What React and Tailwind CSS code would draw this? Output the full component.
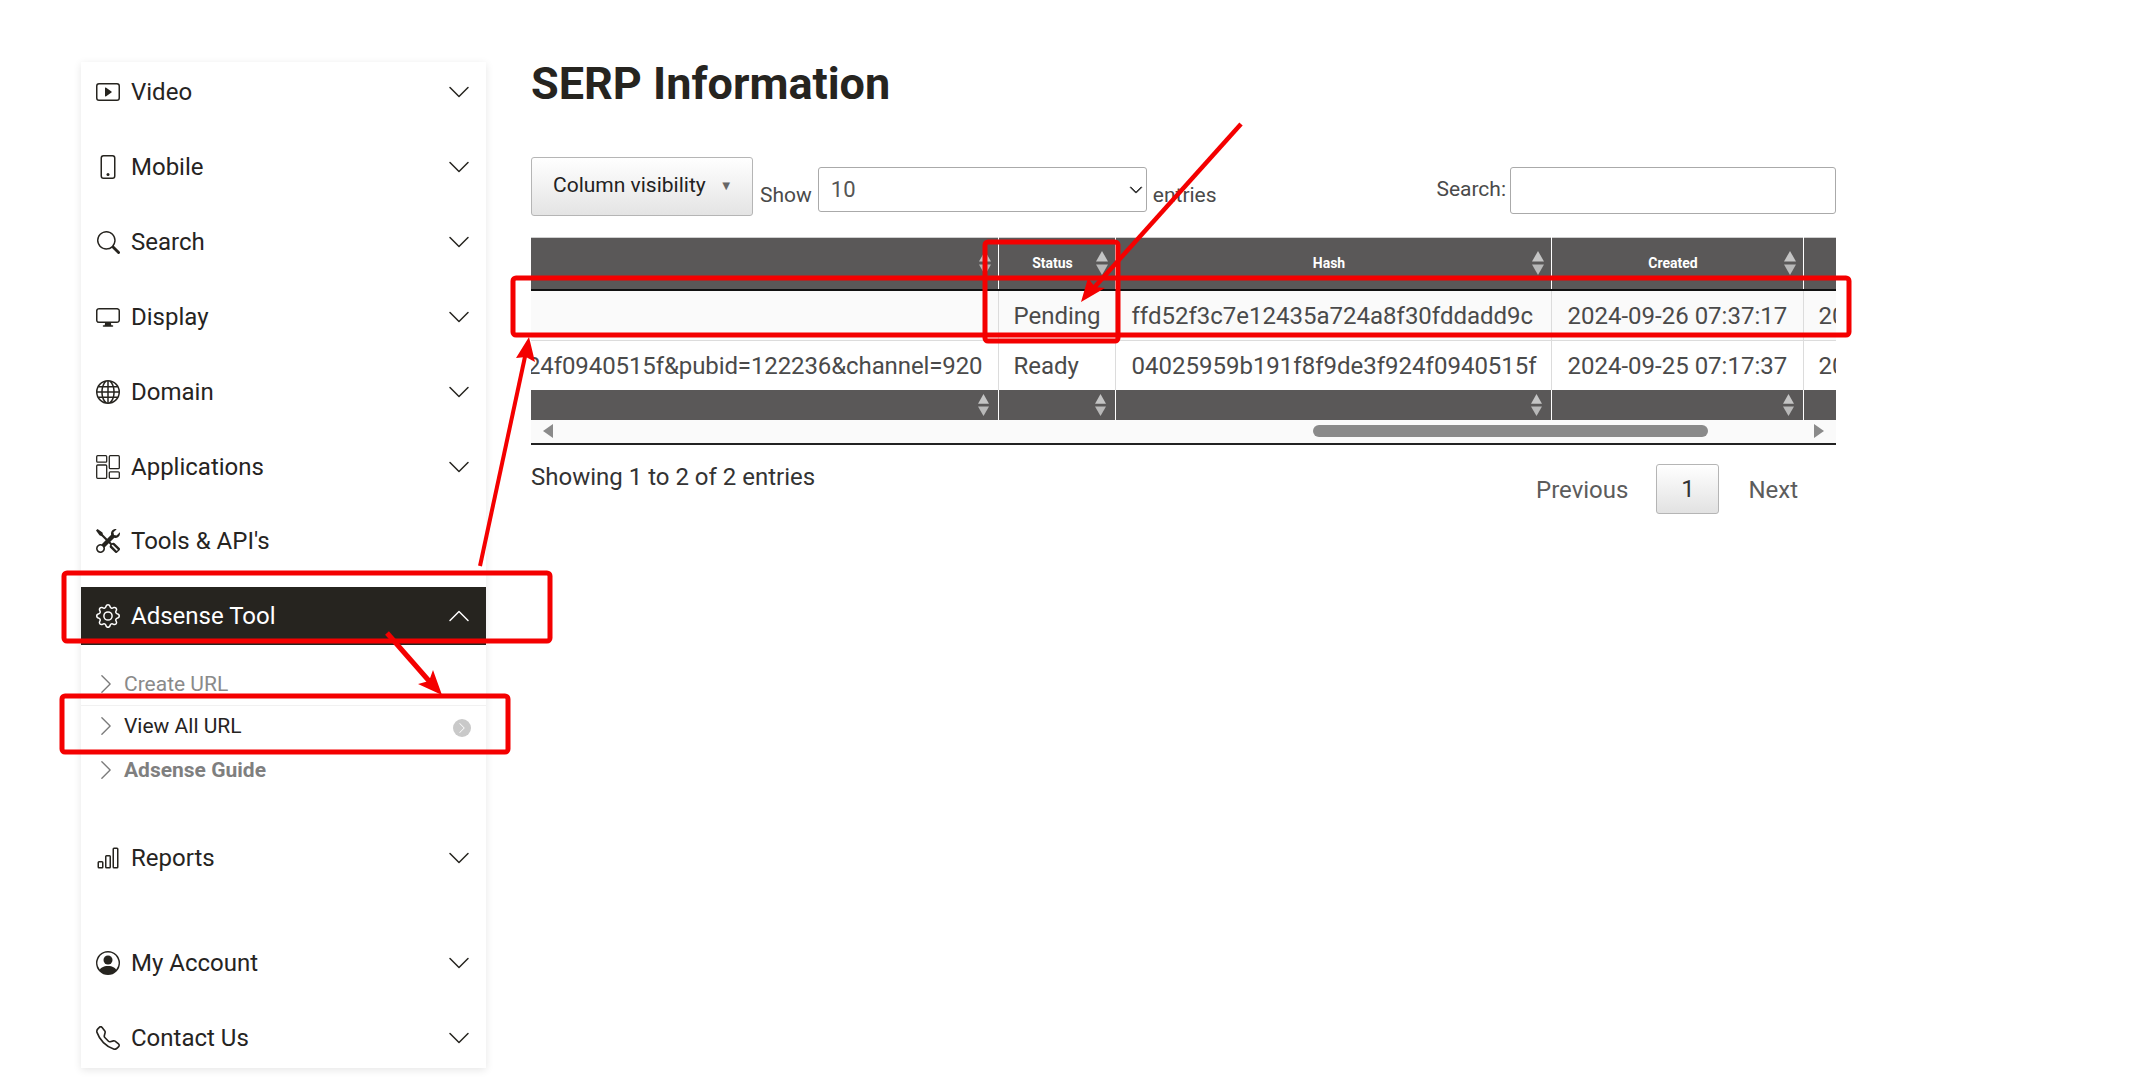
import React from "react";
import { BsPlayBtn, BsPhone, BsSearch, BsDisplay, BsGlobe, BsTools, BsGear, BsBarChart, BsPersonCircle, BsTelephone, BsChevronDown, BsChevronUp, BsChevronRight } from "react-icons/bs";

const Apps = () => (
  <svg width="24" height="24" viewBox="0 0 24 24" fill="none" stroke="currentColor" strokeWidth="1.3">
    <rect x="0.7" y="0.7" width="10" height="6.5" rx="1" />
    <rect x="13.3" y="0.7" width="10" height="13" rx="1" />
    <rect x="0.7" y="10" width="10" height="13.3" rx="1" />
    <rect x="13.3" y="16.8" width="10" height="6.5" rx="1" />
  </svg>
);

const Row = ({ icon, label, chevron = true, className = "" }) => (
  <div className={`h-[58px] flex items-center pl-[15px] pr-[15px] text-[#26241f] ${className}`}>
    <span className="w-[24px] h-[24px] flex items-center justify-center shrink-0 text-[24px]">{icon}</span>
    <span className="ml-[11px] text-[24px] leading-none">{label}</span>
    {chevron && <BsChevronDown className="ml-auto text-[24px] text-[#26241f]" />}
  </div>
);

const Sub = ({ label, className = "", labelClass = "", border = false, dot = false }) => (
  <div className={`h-[43px] flex items-center pl-[14px] pr-[15px] text-[21px] leading-none ${border ? "border-t border-[#f1f1f1] pb-[2px]" : ""} ${className}`}>
    <BsChevronRight className="text-[22px] text-[#7c7c7c] shrink-0" />
    <span className={`ml-[7px] ${labelClass}`}>{label}</span>
    {dot && (
      <span className="ml-auto mt-[3px] w-[18px] h-[18px] rounded-full bg-[#c9c9c9] flex items-center justify-center">
        <BsChevronRight className="text-[12px] text-white" />
      </span>
    )}
  </div>
);

const Sort = ({ big = false }) => (
  <svg width={big ? 14 : 13} height={big ? 24 : 22} viewBox="0 0 14 24" className="shrink-0">
    <path d="M7 0 L13 10.5 H1 Z" fill="#c4c4c4" />
    <path d="M7 24 L13 13.5 H1 Z" fill="#b8b8b8" />
  </svg>
);

const Th = ({ label }) => (
  <th className="relative h-[52px] p-0 font-bold text-[14px] text-white border-l border-white">
    <span className="block pr-[8px] text-center leading-none">{label}</span>
    <span className="absolute right-[6px] top-[13px]"><Sort big /></span>
  </th>
);

const Td = ({ children, first = false, pad = "pl-[15px]" }) => (
  <td className={`p-0 text-[24px] leading-[30px] text-[#4a4a4a] ${first ? "" : "border-l border-[#dcdcdc]"}`}>
    <div className={`flex pt-[2px] whitespace-nowrap overflow-hidden ${first ? "justify-end pr-[15px] tracking-[-0.1px]" : pad}`}>{children}</div>
  </td>
);

const FootTh = ({ first = false }) => (
  <th className={`h-[30px] p-0 ${first ? "" : "border-l border-white"}`}>
    <div className="flex justify-end pr-[8px]"><Sort /></div>
  </th>
);

export default function App() {
  return (
    <div className="relative w-[2143px] h-[1087px] overflow-hidden bg-white font-['Roboto',sans-serif] text-[#26241f]">
      <div className="flex">
        <aside className="ml-[81px] mt-[62px] w-[405px] h-[1006px] bg-white shadow-[0_2px_8px_rgba(0,0,0,0.1)] pt-[1px] flex flex-col gap-[17px]">
          <Row icon={<BsPlayBtn />} label="Video" />
          <Row icon={<BsPhone />} label="Mobile" />
          <Row icon={<BsSearch className="text-[23px]" />} label="Search" />
          <Row icon={<BsDisplay />} label="Display" />
          <Row icon={<BsGlobe />} label="Domain" />
          <Row icon={<Apps />} label="Applications" />
          <Row icon={<BsTools />} label="Tools & API's" chevron={false} className="-mt-px" />
          <div className="h-[58px] bg-[#26241f] flex items-center pl-[15px] pr-[15px] text-white">
            <BsGear className="text-[24px] shrink-0" />
            <span className="ml-[11px] text-[24px] leading-none">Adsense Tool</span>
            <BsChevronUp className="ml-auto text-[24px]" />
          </div>
          <div className="flex flex-col -mt-[17px] pt-[17px] pb-[21px]">
            <Sub label="Create URL" className="text-[#8a8a8a]" labelClass="mt-[2px]" />
            <Sub label="View All URL" className="text-[#26241f]" border dot />
            <Sub label="Adsense Guide" className="text-[#7f7f7f] font-bold" labelClass="mt-[2px]" />
          </div>
          <Row icon={<BsBarChart />} label="Reports" />
          <div className="mt-[30px]"><Row icon={<BsPersonCircle />} label="My Account" /></div>
          <Row icon={<BsTelephone />} label="Contact Us" />
        </aside>

        <main className="ml-[45px] w-[1305px]">
          <h1 className="mt-[57px] h-[54px] text-[45px] leading-[54px] font-bold text-[#26241f]">SERP Information</h1>

          <div className="mt-[46px] h-[59px] flex items-start">
            <button className="w-[222px] h-[59px] pb-[2px] border border-[#b5b5b5] rounded-[3px] bg-gradient-to-b from-white to-[#e4e4e4] flex items-center pl-[21px] text-[21px] text-[#222]">
              Column visibility
              <span className="ml-[14px] text-[13px] text-[#666]">▼</span>
            </button>
            <span className="ml-[7px] mt-[26px] text-[21px] leading-[24px] text-[#4a4a4a]">Show</span>
            <div className="ml-[6px] mt-[10px] w-[329px] h-[45px] border border-[#aaa] rounded-[3px] flex items-center pl-[12px] pr-[3px] text-[22px] text-[#555]">
              10
              <BsChevronDown className="ml-auto text-[14px] text-[#333] stroke-[1px]" />
            </div>
            <span className="ml-[6px] mt-[26px] text-[21px] leading-[24px] text-[#4a4a4a]">entries</span>
            <span className="ml-auto mt-[20px] text-[21px] leading-[24px] text-[#4a4a4a]">Search:</span>
            <div className="ml-[4px] mt-[10px] w-[326px] h-[47px] border border-[#aaa] rounded-[3px]" />
          </div>

          <div className="mt-[21px] w-[1305px] overflow-hidden">
            <table className="table-fixed w-[1305px] border-collapse">
              <colgroup>
                <col className="w-[467px]" />
                <col className="w-[117px]" />
                <col className="w-[436px]" />
                <col className="w-[252px]" />
                <col className="w-[33px]" />
              </colgroup>
              <thead>
                <tr className="bg-[#5a5858] border-t border-[#cfcfcf] border-b-2 border-b-[#111]">
                  <th className="relative h-[52px] p-0"><span className="absolute right-[6px] top-[13px]"><Sort big /></span></th>
                  <Th label="Status" />
                  <Th label="Hash" />
                  <Th label="Created" />
                  <th className="border-l border-white p-0" />
                </tr>
              </thead>
              <tbody>
                <tr className="h-[51px] bg-[#fafafa] border-b border-[#dcdcdc]">
                  <Td first>{""}</Td>
                  <Td>Pending</Td>
                  <Td pad="pl-[16px]">ffd52f3c7e12435a724a8f30fddadd9c</Td>
                  <Td pad="pl-[16px]">2024-09-26 07:37:17</Td>
                  <Td>2024-09-26 08:00:00</Td>
                </tr>
                <tr className="h-[49px] bg-white">
                  <Td first>hash=04025959b191f8f9de3f924f0940515f&amp;pubid=122236&amp;channel=920</Td>
                  <Td>Ready</Td>
                  <Td pad="pl-[16px]">04025959b191f8f9de3f924f0940515f</Td>
                  <Td pad="pl-[16px]">2024-09-25 07:17:37</Td>
                  <Td>2024-09-25 08:00:00</Td>
                </tr>
              </tbody>
              <tfoot>
                <tr className="bg-[#5a5858]">
                  <FootTh first />
                  <FootTh />
                  <FootTh />
                  <FootTh />
                  <th className="border-l border-white p-0" />
                </tr>
              </tfoot>
            </table>
            <div className="h-[25px] bg-[#fafafa] border-b-2 border-[#222] flex items-center pl-[12px] pr-[12px]">
              <span className="w-0 h-0 border-y-[7px] border-y-transparent border-r-[10px] border-r-[#8a8a8a]" />
              <span className="ml-[760px] w-[395px] h-[12px] rounded-full bg-[#8a8a8a]" />
              <span className="ml-auto w-0 h-0 border-y-[7px] border-y-transparent border-l-[10px] border-l-[#8a8a8a]" />
            </div>
          </div>

          <div className="flex items-start">
            <span className="mt-[18px] text-[24px] leading-[28px] text-[#333]">Showing 1 to 2 of 2 entries</span>
            <div className="ml-auto mt-[19px] mr-[38px] flex items-center text-[24px] text-[#5c5c5c]">
              <span className="pt-[3px]">Previous</span>
              <span className="ml-[28px] w-[63px] h-[50px] border border-[#b5b5b5] rounded-[3px] bg-gradient-to-b from-white to-[#e2e2e2] flex items-center justify-center text-[#333]">1</span>
              <span className="ml-[29px] pt-[3px]">Next</span>
            </div>
          </div>
        </main>
      </div>

      <svg className="absolute inset-0 pointer-events-none" width="2143" height="1087" viewBox="0 0 2143 1087" fill="none">
        <g stroke="#f40000" strokeWidth="5">
          <rect x="64" y="573" width="486" height="68" rx="3" />
          <rect x="62" y="696" width="446" height="56" rx="3" />
          <rect x="513" y="278" width="1336" height="57" rx="3" />
          <rect x="985" y="242" width="133" height="99" rx="3" />
          <path d="M480 566 L526 352" strokeWidth="4" />
          <path d="M387 633 L430 682" strokeWidth="5" />
          <path d="M1241 124 L1091 291" strokeWidth="4.5" />
        </g>
        <g fill="#f40000">
          <path d="M529 337 L535 362 L526 357 L516 358 Z" />
          <path d="M442 695 L433 670 L429 681 L418 684 Z" />
          <path d="M1081 302 L1088 278 L1095 287 L1105 288 Z" />
        </g>
      </svg>
    </div>
  );
}
